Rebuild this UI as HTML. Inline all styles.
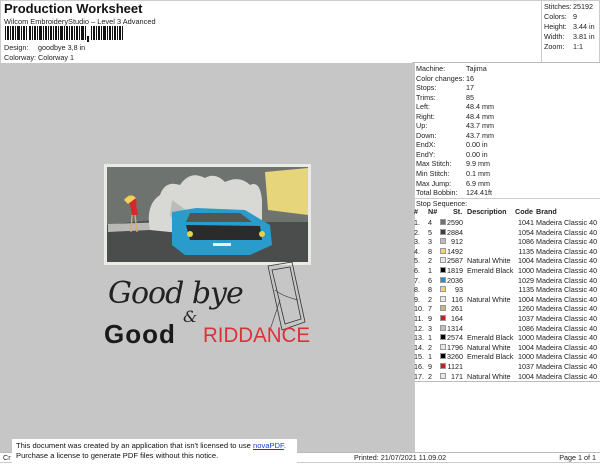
<!DOCTYPE html>
<html><head><meta charset="utf-8"><style>
*{margin:0;padding:0;box-sizing:border-box}
body{width:600px;height:464px;background:#fff;font-family:"Liberation Sans",sans-serif;color:#222;position:relative;overflow:hidden;font-size:7.2px}
.a{position:absolute;white-space:nowrap}
.grey{position:absolute;left:0;top:63px;width:412px;height:389px;background:#c6c6c6}
.rp{position:absolute;left:412px;top:62px;width:188px;height:390px;border-left:3px solid #c8c8c8;border-top:1px solid #bbb}
.sw{position:absolute;width:6px;height:6px;border:1px solid #999}
</style></head><body>
<div class="a" style="left:4px;top:1px;font-size:13px;font-weight:bold;color:#111">Production Worksheet</div>
<div class="a" style="left:4px;top:17px;font-size:7.4px">Wilcom EmbroideryStudio – Level 3 Advanced</div>
<svg class="a" style="left:5px;top:26px" width="120" height="17">
<g fill="#111">
<rect x="0" y="0" width="1" height="14"/><rect x="2" y="0" width="2" height="14"/><rect x="5" y="0" width="1" height="14"/><rect x="7" y="0" width="2" height="14"/><rect x="10" y="0" width="1" height="14"/><rect x="12" y="0" width="3" height="14"/><rect x="16" y="0" width="1" height="14"/><rect x="18" y="0" width="2" height="14"/><rect x="21" y="0" width="1" height="14"/><rect x="24" y="0" width="2" height="14"/><rect x="27" y="0" width="1" height="14"/><rect x="29" y="0" width="2" height="14"/><rect x="32" y="0" width="1" height="14"/><rect x="34" y="0" width="3" height="14"/><rect x="38" y="0" width="1" height="14"/><rect x="40" y="0" width="2" height="14"/><rect x="43" y="0" width="1" height="14"/><rect x="45" y="0" width="2" height="14"/><rect x="48" y="0" width="1" height="14"/><rect x="50" y="0" width="2" height="14"/><rect x="53" y="0" width="1" height="14"/><rect x="55" y="0" width="3" height="14"/><rect x="59" y="0" width="1" height="14"/><rect x="61" y="0" width="2" height="14"/><rect x="64" y="0" width="1" height="14"/><rect x="66" y="0" width="2" height="14"/><rect x="69" y="0" width="1" height="14"/><rect x="71" y="0" width="2" height="14"/><rect x="74" y="0" width="1" height="14"/><rect x="76" y="0" width="3" height="14"/><rect x="80" y="0" width="1" height="14"/>
<rect x="82" y="10" width="2" height="6"/>
<rect x="86" y="0" width="1" height="14"/><rect x="88" y="0" width="2" height="14"/><rect x="91" y="0" width="1" height="14"/><rect x="93" y="0" width="2" height="14"/><rect x="96" y="0" width="1" height="14"/><rect x="98" y="0" width="3" height="14"/><rect x="102" y="0" width="1" height="14"/><rect x="104" y="0" width="2" height="14"/><rect x="107" y="0" width="1" height="14"/><rect x="109" y="0" width="2" height="14"/><rect x="112" y="0" width="1" height="14"/><rect x="114" y="0" width="2" height="14"/><rect x="117" y="0" width="1" height="14"/>
</g></svg>
<div class="a" style="left:4px;top:43px">Design:</div><div class="a" style="left:38px;top:43px">goodbye 3,8 in</div>
<div class="a" style="left:4px;top:53px">Colorway:</div><div class="a" style="left:38px;top:53px">Colorway 1</div>
<div class="a" style="left:0;top:0;width:600px;height:63px;border:1px solid #ccc;border-bottom:none"></div>
<div class="a" style="left:541px;top:0;width:1px;height:62px;background:#ccc"></div>
<div class="a" style="left:544px;top:2px;line-height:10px">Stitches:<br>Colors:<br>Height:<br>Width:<br>Zoom:</div>
<div class="a" style="left:573px;top:2px;line-height:10px">25192<br>9<br>3.44 in<br>3.81 in<br>1:1</div>

<div class="grey"></div>
<svg class="a" style="left:0;top:63px" width="412" height="389">
<g transform="translate(0,-63)">
<rect x="104" y="164" width="207" height="101" fill="#e8ece4"/>
<rect x="107" y="167" width="201" height="95" fill="#6f7370"/>
<path d="M107 225 Q180 215 240 222 L308 222 L308 262 L107 262Z" fill="#4a4d4c"/>
<path d="M265 172 L308 168 L308 215 L268 210 Z" fill="#e6d57a"/>
<path d="M108 224 L230 220 L230 226 L108 232Z" fill="#b8b8b4"/>
<path d="M150 230 Q145 205 160 195 Q165 180 180 185 Q190 170 205 178 Q215 172 225 182 Q240 175 250 185 Q260 180 262 200 L262 225 L200 235 Z" fill="#d8d9d4"/>
<path d="M170 215 L172 200 L186 210 L180 235 Z" fill="#bcbcb8"/>
<path d="M172 212 L196 208 L245 210 L270 225 L272 245 L250 255 L185 255 L172 245 Z" fill="#2a9ccc"/>
<path d="M186 225 L260 226 L262 240 L190 240Z" fill="#2b2b2b"/>
<path d="M190 213 L240 213 L252 222 L186 222Z" fill="#555"/>
<rect x="213" y="243" width="18" height="3" fill="#eee"/>
<circle cx="190" cy="234" r="3" fill="#e6d14c"/><circle cx="262" cy="234" r="3" fill="#e6d14c"/>
<path d="M130 205 Q125 198 132 196 Q138 198 136 205 L138 215 L132 215 Z" fill="#d8262a"/>
<path d="M124 200 Q130 192 136 198 L128 204 Z" fill="#eed25a"/>
<path d="M132 215 L131 232 M135 215 L137 232" stroke="#d8b060" stroke-width="1.3"/>
<path d="M268 266 L292 262 L305 322 L282 330 Z M272 270 L290 267 L301 319 L285 324 Z" fill="none" stroke="#333" stroke-width="0.8"/>
<path d="M275 290 Q282 296 298 300 M280 300 L270 330" fill="none" stroke="#444" stroke-width="0.7"/>
<text x="108" y="303" font-family="DejaVu Serif,serif" font-style="italic" font-size="30" fill="#222" letter-spacing="-1">Good bye</text>
<text x="183" y="322" font-family="DejaVu Serif,serif" font-style="italic" font-size="16" fill="#222">&amp;</text>
<text x="104" y="343" font-family="Liberation Sans,sans-serif" font-weight="bold" font-size="26" fill="#1a1a1a" letter-spacing="1">Good</text>
<text x="203" y="342" font-family="Liberation Sans,sans-serif" font-size="21" fill="#d9333a" textLength="107" lengthAdjust="spacingAndGlyphs">RIDDANCE</text>
</g></svg>

<div class="rp">
<div class="a" style="left:1px;top:1px;line-height:9.55px">Machine:<br>Color changes:<br>Stops:<br>Trims:<br>Left:<br>Right:<br>Up:<br>Down:<br>EndX:<br>EndY:<br>Max Stitch:<br>Min Stitch:<br>Max Jump:<br>Total Bobbin:</div>
<div class="a" style="left:51px;top:1px;line-height:9.55px">Tajima<br>16<br>17<br>85<br>48.4 mm<br>48.4 mm<br>43.7 mm<br>43.7 mm<br>0.00 in<br>0.00 in<br>9.9 mm<br>0.1 mm<br>6.9 mm<br>124.41ft</div>
<div class="a" style="left:0;top:135px;width:185px;height:1px;background:#ccc"></div>
<div class="a" style="left:1px;top:136px">Stop Sequence:</div>
<div class="a" style="left:0;top:318px;width:185px;height:1px;background:#bbb"></div>
</div>
<div id="tbl" class="a" style="left:414px;top:207px;line-height:9.6px"></div>
<script>
var rows=[["1.","4","#6d7278","2590","","1041"],["2.","5","#3b3f44","2884","","1054"],["3.","3","#bdbdbb","912","","1086"],["4.","8","#f1d46a","1492","","1135"],["5.","2","#e8e8ea","2587","Natural White","1004"],["6.","1","#000","1819","Emerald Black","1000"],["7.","6","#2a8cc8","2036","","1029"],["8.","8","#f1d46a","93","","1135"],["9.","2","#e8e8ea","116","Natural White","1004"],["10.","7","#c8b482","261","","1260"],["11.","9","#c81e24","164","","1037"],["12.","3","#bdbdbb","1314","","1086"],["13.","1","#000","2574","Emerald Black","1000"],["14.","2","#e8e8ea","1796","Natural White","1004"],["15.","1","#000","3260","Emerald Black","1000"],["16.","9","#c81e24","1121","","1037"],["17.","2","#e8e8ea","171","Natural White","1004"]];
var h='<div style="position:relative;height:11px;font-weight:bold;text-decoration:underline"><span class="a" style="left:0">#</span><span class="a" style="left:14px">N#</span><span class="a" style="left:39px">St.</span><span class="a" style="left:53px">Description</span><span class="a" style="left:101px">Code</span><span class="a" style="left:122px">Brand</span></div>';
rows.forEach(function(r){h+='<div style="position:relative;height:9.6px"><span class="a" style="left:0">'+r[0]+'</span><span class="a" style="left:14px">'+r[1]+'</span><span class="sw" style="left:26px;top:1px;background:'+r[2]+'"></span><span class="a" style="left:29px;width:20px;text-align:right">'+r[3]+'</span><span class="a" style="left:53px">'+r[4]+'</span><span class="a" style="left:101px;width:19px;text-align:right">'+r[5]+'</span><span class="a" style="left:122px">Madeira Classic 40</span></div>';});
document.getElementById('tbl').innerHTML=h;
</script>
<div class="a" style="left:0;top:452px;width:600px;height:11px;border-top:1px solid #bbb;border-bottom:1px solid #ccc;background:#fff"></div>
<div class="a" style="left:3px;top:453px">Cr</div>
<div class="a" style="left:354px;top:453px">Printed: 21/07/2021 11.09.02</div>
<div class="a" style="right:4px;top:453px">Page 1 of 1</div>
<div class="a" style="left:12px;top:439px;width:285px;height:25px;background:#fff;padding:2px 0 0 4px;font-size:7.6px;line-height:10px;color:#111">This document was created by an application that isn't licensed to use <span style="color:#1a3fd0;text-decoration:underline">novaPDF</span>.<br>Purchase a license to generate PDF files without this notice.</div>
</body></html>
